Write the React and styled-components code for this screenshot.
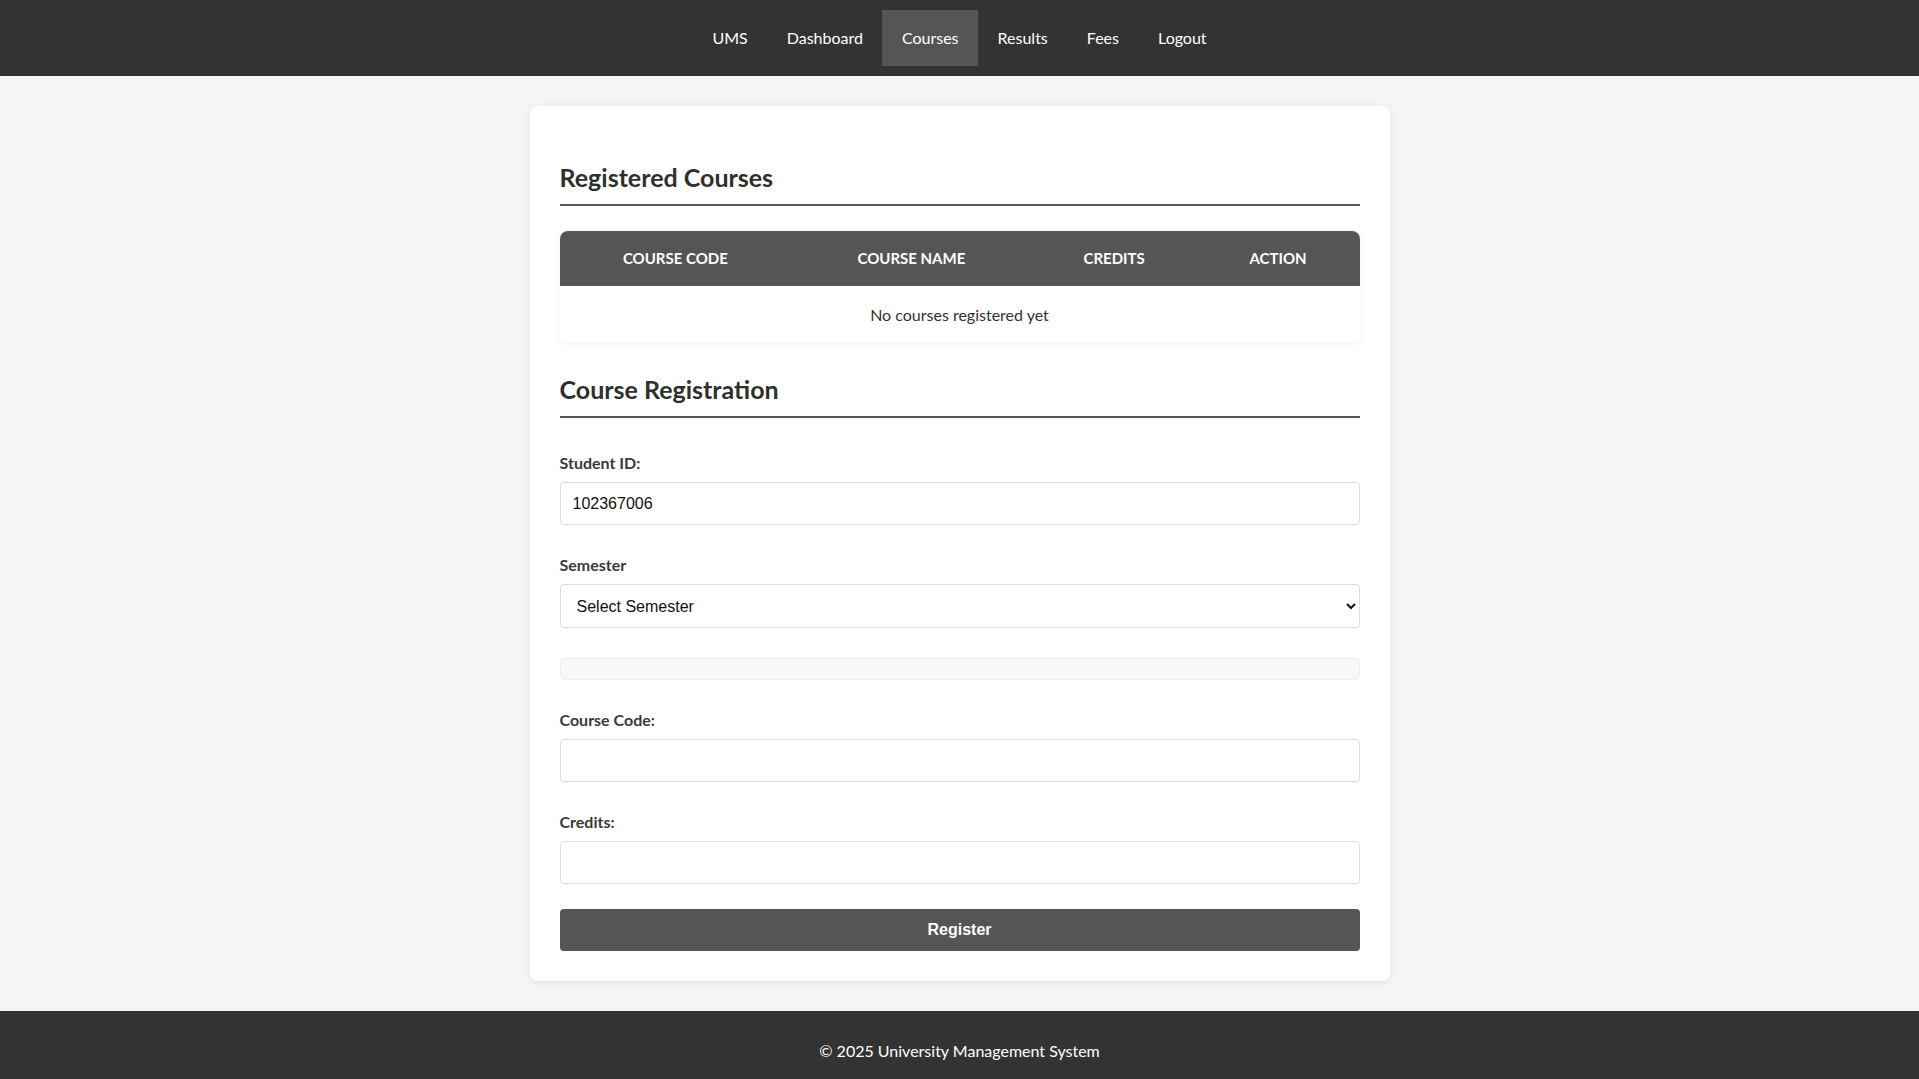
import styled, {createGlobalStyle} from 'styled-components';
import {useState} from 'react';

const GlobalStyle = createGlobalStyle `
  html {
    overflow-y: scroll;
  }
  body {
    margin: 0;
    background-color: #f4f5f7;
    font-family: Lato, "Noto Sans", sans-serif;
    color: #333;
  }
  ::-webkit-scrollbar {
    width: 17px;
    background-color: #2b2b2b;
  }
  ::-webkit-scrollbar-thumb {
    background-color: #9f9f9f;
    border-radius: 6px;
    border: 3px solid #2b2b2b;
    border-top-width: 0;
    border-bottom-width: 0;
  }
  ::-webkit-scrollbar-button:single-button {
    display: block;
    height: 17px;
    background-color: #2b2b2b;
    background-repeat: no-repeat;
    background-size: 5px 5px;
  }
  ::-webkit-scrollbar-button:single-button:vertical:decrement {
    background-image:
      linear-gradient(to bottom right, transparent 50%, #a3a3a3 50%),
      linear-gradient(to bottom left, transparent 50%, #a3a3a3 50%);
    background-position: 3px 5px, 8px 5px;
  }
  ::-webkit-scrollbar-button:single-button:vertical:increment {
    background-image:
      linear-gradient(to top right, transparent 50%, #a3a3a3 50%),
      linear-gradient(to top left, transparent 50%, #a3a3a3 50%);
    background-position: 3px 7px, 8px 7px;
  }
`;

const Nav = styled.nav `
  background-color: #333;
  display: flex;
  justify-content: center;
  padding: 10px 0;
`;

const NavLink = styled.a `
  display: block;
  padding: 16px 19.5px;
  line-height: 24px;
  font-size: 16px;
  color: #fff;
  text-decoration: none;
  background-color: ${(p) => (p.$active ? '#555' : 'transparent')};
  cursor: pointer;
`;

const Main = styled.main `
  padding: 30px;
`;

const Card = styled.div `
  max-width: 800px;
  margin: 0 auto;
  background-color: #fff;
  padding: 30px;
  border-radius: 8px;
  box-shadow: 0 2px 10px rgba(0, 0, 0, 0.08);
`;

const SectionTitle = styled.h2 `
  margin: 25px 0 25px;
  padding-bottom: 11px;
  border-bottom: 2px solid #555;
  font-size: 25px;
  line-height: 32px;
  font-weight: 700;
  color: #2f2f2f;
`;

const Table = styled.table `
  width: 100%;
  border-collapse: collapse;
  border-radius: 8px;
  overflow: hidden;
  box-shadow: 0 1px 6px rgba(0, 0, 0, 0.06);
  margin-bottom: 30px;
`;

const Th = styled.th `
  background-color: #555;
  color: #fff;
  font-size: 15px;
  font-weight: 700;
  text-transform: uppercase;
  padding: 18px 10px;
  line-height: 19px;
  width: ${(p) => p.$w}px;
`;

const EmptyCell = styled.td `
  text-align: center;
  padding: 19px 10px;
  line-height: 19px;
  font-size: 16px;
  color: #333;
`;

const Form = styled.form `
  padding-top: 10px;
`;

const FormGroup = styled.div `
  margin-bottom: ${(p) => (p.$last ? 0 : 30)}px;
`;

const Label = styled.label `
  display: block;
  font-size: 16px;
  font-weight: 700;
  line-height: 20px;
  margin-bottom: 9px;
  color: #3a3a3a;
`;

const Input = styled.input `
  display: block;
  width: 100%;
  box-sizing: border-box;
  height: 43px;
  padding: 0 12px;
  border: 1px solid #ddd;
  border-radius: 4px;
  font-family: "Liberation Sans", Arial, sans-serif;
  font-size: 16px;
  color: #111;
  background-color: #fff;
`;

const Select = styled.select `
  display: block;
  width: 100%;
  box-sizing: border-box;
  height: 44px;
  padding: 0 12px;
  border: 1px solid #ddd;
  border-radius: 4px;
  font-family: "Liberation Sans", Arial, sans-serif;
  font-size: 16px;
  color: #111;
  background-color: #fff;
`;

const CourseList = styled.div `
  padding: 10px;
  background-color: #f7f8f9;
  border: 1px solid #eee;
  border-radius: 4px;
  margin-bottom: 30px;
`;

const Button = styled.button `
  display: block;
  width: 100%;
  height: 42px;
  margin-top: 25px;
  border: none;
  border-radius: 4px;
  background-color: #555;
  color: #fff;
  font-family: "Liberation Sans", Arial, sans-serif;
  font-size: 16px;
  font-weight: 700;
  cursor: pointer;
`;

const Footer = styled.footer `
  background-color: #333;
  color: #fff;
  text-align: center;
  padding: 28px 24px 24px;
  line-height: 24px;
  font-size: 16px;
`;

const links = ['UMS', 'Dashboard', 'Courses', 'Results', 'Fees', 'Logout'];

export default function App() {
    const [studentId, setStudentId] = useState('102367006');
    const [semester, setSemester] = useState('');
    const [code, setCode] = useState('');
    const [credits, setCredits] = useState('');

    return (
        <>
            <GlobalStyle/>
            <Nav>
                {links.map((l) => (
                    <NavLink key={l} $active={l === 'Courses'}>{l}</NavLink>
                ))}
            </Nav>
            <Main>
                <Card>
                    <SectionTitle>Registered Courses</SectionTitle>
                    <Table>
                        <thead>
                            <tr>
                                <Th $w={237}>Course Code</Th>
                                <Th $w={247}>Course Name</Th>
                                <Th $w={159}>Credits</Th>
                                <Th $w={157}>Action</Th>
                            </tr>
                        </thead>
                        <tbody>
                            <tr>
                                <EmptyCell colSpan={4}>No courses registered yet</EmptyCell>
                            </tr>
                        </tbody>
                    </Table>

                    <SectionTitle>Course Registration</SectionTitle>
                    <Form onSubmit={(e) => e.preventDefault()}>
                        <FormGroup>
                            <Label>Student ID:</Label>
                            <Input value={studentId} onChange={(e) => setStudentId(e.target.value)}/>
                        </FormGroup>
                        <FormGroup>
                            <Label>Semester</Label>
                            <Select value={semester} onChange={(e) => setSemester(e.target.value)}>
                                <option value="">Select Semester</option>
                                <option value="1">Semester 1</option>
                                <option value="2">Semester 2</option>
                            </Select>
                        </FormGroup>
                        <CourseList/>
                        <FormGroup>
                            <Label>Course Code:</Label>
                            <Input value={code} onChange={(e) => setCode(e.target.value)}/>
                        </FormGroup>
                        <FormGroup $last>
                            <Label>Credits:</Label>
                            <Input value={credits} onChange={(e) => setCredits(e.target.value)}/>
                        </FormGroup>
                        <Button type="submit">Register</Button>
                    </Form>
                </Card>
            </Main>
            <Footer>© 2025 University Management System</Footer>
        </>
    );
}
